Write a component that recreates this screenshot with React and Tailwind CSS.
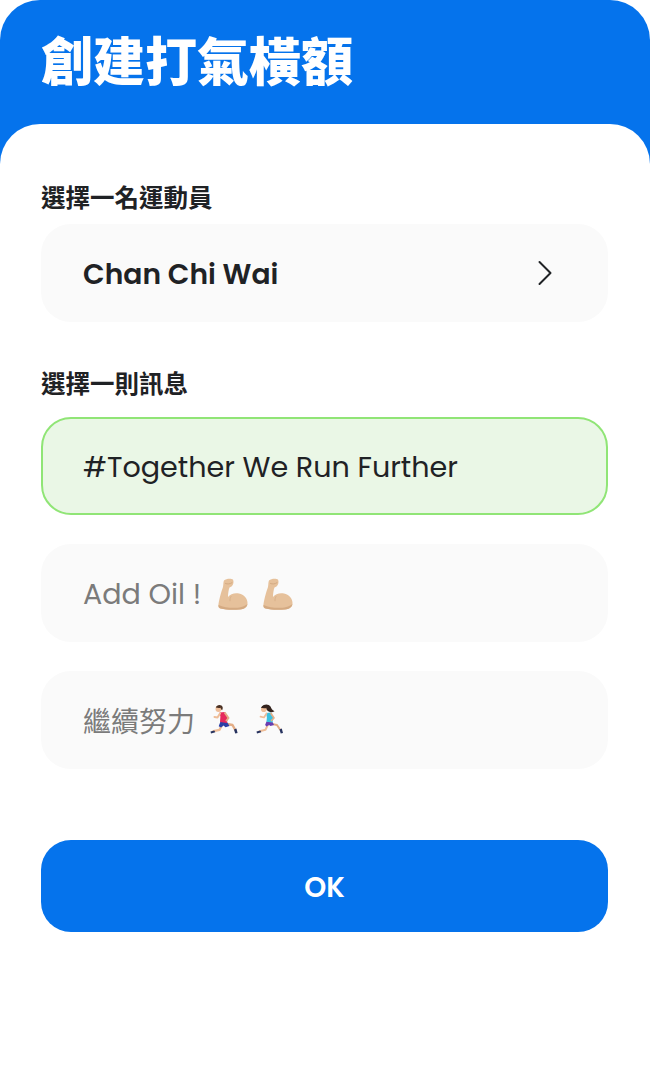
import React from "react";

const LATIN = "font-['Poppins','Inter','Noto_Sans_CJK_TC',sans-serif]";
const CJK = "font-['Noto_Sans_CJK_TC','Noto_Sans_CJK_JP',sans-serif]";

function Bicep({ className }) {
  return (
    <svg className={className} viewBox="0 0 30 32" fill="none">
      <path
        d="M6 2.500C8 .5 13 0 15 1.500c1 2 .5 5.500-1.500 7l-2 1c-1 2.500-1.500 6-1.500 9.500 2-3 7-4.500 11-3.500 5 1 8.500 5 8.500 9.500 0 4-2.500 6-7.500 6.500-7 .5-14 .5-19.500-1-2-.5-2.500-2-2-4.500 1-6 3-13 4.500-17 .5-2 .2-5 1-6.500z"
        fill="#e6c19b"
      />
      <path
        d="M.6 27c4 2 10 2.800 15 2.800 5.500 0 10.500-.8 13.800-3.800-.6 3.400-3 5-7.400 5.500-7 .5-14 .5-19.500-1-1.600-.4-2.200-1.500-1.900-3.500z"
        fill="#d4aa82"
      />
      <path d="M7.500 5.500c2 .8 4.500.6 6.500-.8" stroke="#d4aa82" strokeWidth="1" strokeLinecap="round" />
      <path d="M13 18.500c-.8 1.300-1.100 2.800-1 4.300" stroke="#d8b089" strokeWidth="1" strokeLinecap="round" />
    </svg>
  );
}

function RunnerMan({ className }) {
  return (
    <svg className={className} viewBox="0 0 30 32" fill="none" strokeLinecap="round" strokeLinejoin="round">
      {/* back leg */}
      <path d="M14 19.500l8.500 1.500 2.500 4.500" stroke="#e3ad86" strokeWidth="2.400" />
      {/* front leg */}
      <path d="M12 21l-2.500 4.800-6 1.400" stroke="#eebd98" strokeWidth="2.400" />
      {/* shorts */}
      <path d="M10.500 17.500l6.500.5 2.500 4-4 1.200-2-1.600-2.500 2-2.300-1.400z" fill="#2b3fa6" />
      {/* shirt */}
      <path d="M9.500 8.500l5.500-.5 2.800 4.500-.8 6.500-7-1 .4-5.500z" fill="#e6295c" />
      {/* arms */}
      <path d="M10 9.500l-2.500 4-3-.5" stroke="#eebd98" strokeWidth="2" />
      <path d="M15 9l3.500 5-2 2.500" stroke="#e3ad86" strokeWidth="2" />
      {/* head */}
      <circle cx="8.500" cy="5" r="3" fill="#eebd98" />
      <path d="M5.800 3.500C6.500 1 9.500.3 11.500 1.500c1.500 1 1.600 3 .6 4.800-.9-.6-1.400-1.600-1.500-2.500-1.600.3-3.200.2-4.800-.3z" fill="#4a3022" />
      {/* shoes */}
      <path d="M.5 27.500l3.800-1 1 1.700-4.300 1.300z" fill="#27335f" />
      <path d="M24 25.500l2.400-1 1.200 4.500-2.400.6z" fill="#27335f" />
    </svg>
  );
}

function RunnerWoman({ className }) {
  return (
    <svg className={className} viewBox="0 0 30 32" fill="none" strokeLinecap="round" strokeLinejoin="round">
      <path d="M14.500 19.500l7.500 1.500 3 4.500" stroke="#e3ad86" strokeWidth="2" />
      <path d="M13 20.500l-2.500 5.300-6 1.400" stroke="#eebd98" strokeWidth="2" />
      {/* shorts */}
      <path d="M11.500 17.500l6 .5 1.500 3-3.500 1-1.500-1-2.500 1.600-1.400-1.500z" fill="#6a3db0" />
      {/* top */}
      <path d="M11 9l5-.5 2.500 4.500-1 5.500-6-.7.400-4.500z" fill="#3cc1e0" />
      {/* arms */}
      <path d="M11.500 9.500l-2.500 4-3.500-.8" stroke="#eebd98" strokeWidth="1.700" />
      <path d="M16 9.500l3 4.500-2.500 2.500" stroke="#e3ad86" strokeWidth="1.700" />
      {/* hair and head */}
      <path d="M7 2.500c2-3 7-2.600 8.500 0 1 2 1.500 3.500 4 4.800-2.500 1.500-6 1-7.500-1.300z" fill="#33231d" />
      <circle cx="8.800" cy="5.200" r="2.800" fill="#eebd98" />
      <path d="M6 4c.6-2.200 3.200-3 5.200-2l.8 2.200c-2 .3-4.200-.6-6-.2z" fill="#33231d" />
      {/* shoes */}
      <path d="M1.500 27.500l3.800-1 1 1.700-4.300 1.300z" fill="#27335f" />
      <path d="M24.500 25.500l2.300-1 1.200 4.500-2.300.6z" fill="#27335f" />
    </svg>
  );
}

function Option({ selected, children }) {
  return (
    <div
      className={
        "flex h-[98px] items-center rounded-[30px] text-[28.600px] " +
        (selected
          ? "border-2 border-[#90e576] bg-[#eaf7e6] pl-[40px] text-[#1f2225]"
          : "bg-[#fafafa] pl-[42px] text-[#7b7b7b]")
      }
    >
      {children}
    </div>
  );
}

export default function App() {
  return (
    <div className={"h-[1070px] w-[650px] overflow-hidden bg-white " + LATIN}>
      <div className="rounded-t-[40px] bg-[#0573ec]">
        <div className="h-[124px] pl-[41px] pt-[24px]">
          <h1 className={"text-[52px] leading-[70px] font-black text-white " + CJK}>創建打氣橫額</h1>
        </div>
        <div className="h-[946px] rounded-t-[40px] bg-white pl-[41px] pr-[42px] pt-[55px]">
          <h2 className={"text-[24.500px] leading-9 font-bold text-[#1f2225] " + CJK}>選擇一名運動員</h2>
          <div className="mt-[9px] flex h-[98px] items-center justify-between rounded-[30px] bg-[#fafafa] pl-[42px] pr-[55px]">
            <span className="pt-[2px] text-[28.200px] font-semibold text-[#1f2225]">Chan Chi Wai</span>
            <svg className="h-[26px] w-[16px]" viewBox="0 0 16 26" fill="none" stroke="#1f2225" strokeWidth="2" strokeLinecap="round" strokeLinejoin="round">
              <path d="M2.500 2l11 11-11 11" />
            </svg>
          </div>

          <h2 className={"mt-[43px] text-[24.500px] leading-9 font-bold text-[#1f2225] " + CJK}>選擇一則訊息</h2>
          <div className="mt-[16px] flex flex-col gap-[29px]">
            <Option selected>
              <span className="pt-[3px]">#Together We Run Further</span>
            </Option>
            <Option>
              <span className="pt-[3px]">Add Oil !</span>
              <Bicep className="ml-[17px] mt-[2px] h-[32px] w-[30px]" />
              <Bicep className="ml-[15px] mt-[2px] h-[32px] w-[30px]" />
            </Option>
            <Option>
              <span className={"text-[28px] " + CJK}>繼續努力</span>
              <RunnerMan className="ml-[15px] h-[32px] w-[30px]" />
              <RunnerWoman className="ml-[15px] h-[32px] w-[30px]" />
            </Option>
          </div>

          <button className="mt-[71px] h-[92px] w-full rounded-[30px] bg-[#0573ec] pt-[3px] text-[28px] font-semibold text-white">
            OK
          </button>
        </div>
      </div>
    </div>
  );
}
